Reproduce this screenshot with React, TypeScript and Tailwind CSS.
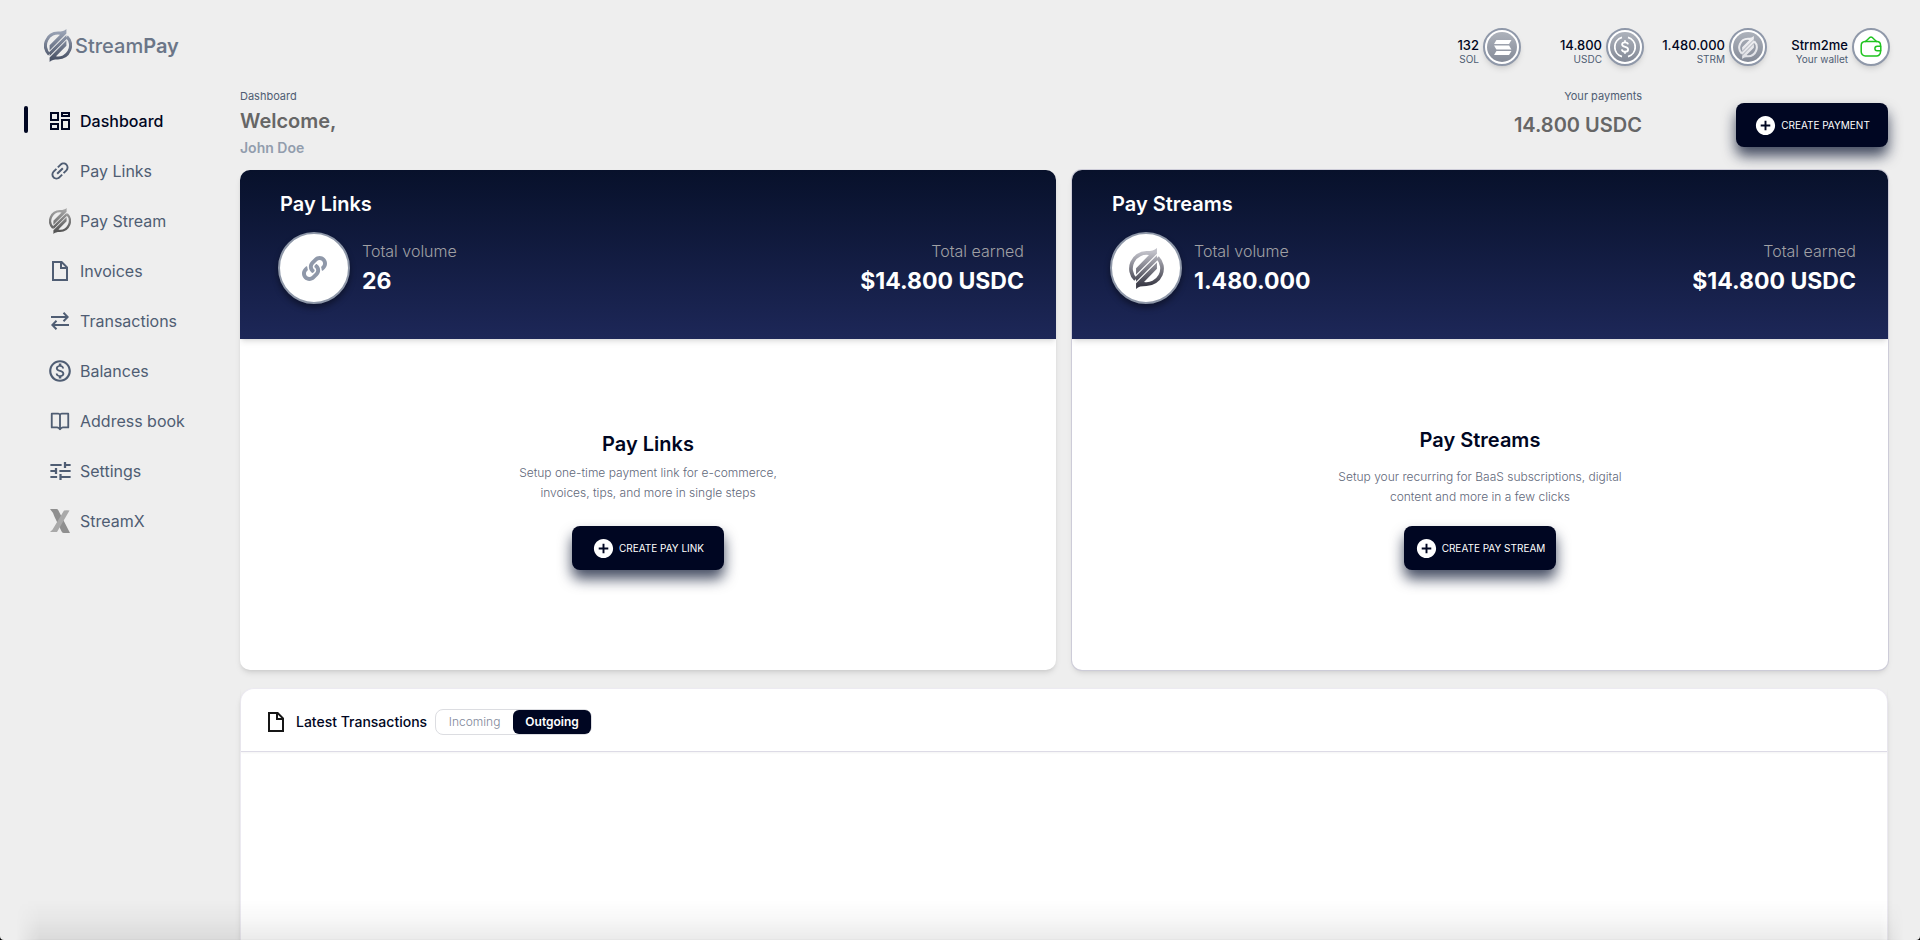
import { useId, useState } from "react";
import type { ReactNode } from "react";
import { FaLink } from "react-icons/fa";
import { BiBookOpen } from "react-icons/bi";
import { MdAddCircle, MdLink, MdOutlineMonetizationOn, MdTune } from "react-icons/md";

const MARK_HALF = "M4.1 26.4A14 14 0 0 1 14 2.500C18 2.500 20.500 2 22.400 0V4.600L5.600 21.400V16.200L16 5.700A11 11 0 0 0 6.200 24.300Z";

function StreamMark({ className, from, to }: { className: string; from: string; to: string }) {
  const id = useId();
  return (
    <svg viewBox="0 0 28 33" className={className} aria-hidden="true">
      <defs>
        <linearGradient id={id} x1="0" y1="0" x2="0" y2="33" gradientUnits="userSpaceOnUse">
          <stop offset="0.1" stopColor={from} />
          <stop offset="0.9" stopColor={to} />
        </linearGradient>
        <linearGradient id={`${id}-flip`} x1="0" y1="33" x2="0" y2="0" gradientUnits="userSpaceOnUse">
          <stop offset="0.1" stopColor={from} />
          <stop offset="0.9" stopColor={to} />
        </linearGradient>
      </defs>
      <path d={MARK_HALF} fill={`url(#${id})`} />
      <path d={MARK_HALF} transform="rotate(180 14 16.500)" fill={`url(#${id}-flip)`} />
      <path d="M5 23.300L22.400 5.900V7.500L23 9.700L5.600 27.100V25.500Z" fill={`url(#${id})`} />
    </svg>
  );
}

function DashboardIcon() {
  return (
    <svg viewBox="0 0 20 18" className="h-[18px] w-5" fill="none" stroke="currentColor" strokeWidth="2" aria-hidden="true">
      <path d="M1 1h7v7H1zM12 1h7v3h-7zM1 12h7v5H1zM12 8h7v9h-7z" />
    </svg>
  );
}

function FileIcon() {
  return (
    <svg viewBox="0 0 16 20" className="h-5 w-4" fill="none" stroke="currentColor" strokeWidth="2" aria-hidden="true">
      <path d="M1 1h8.600L15 6.400V19H1z" />
      <path d="M9 1v6h6" />
    </svg>
  );
}

function TransferIcon() {
  return (
    <svg viewBox="0 0 18 18" className="size-[18px]" fill="none" stroke="currentColor" strokeWidth="2" aria-hidden="true">
      <path d="M0 5h16.500M12.500 0.800L16.700 5L12.500 9.200" />
      <path d="M18 13H1.500M5.500 8.800L1.300 13L5.500 17.200" />
    </svg>
  );
}

function XIcon() {
  return (
    <svg viewBox="0 0 20 24" className="h-6 w-5" aria-hidden="true">
      <path d="M0 0h6.500q1.200 0 1.800 1.200L20 24h-6q-1.600 0-2.400-1.600L4.600 8Q3 3 0 0z" fill="#8f8f8f" />
      <path d="M19.500 1.500Q17 1 14 1.500L2.600 20.500 0 23h7z" fill="#a9a9a9" />
    </svg>
  );
}

function SolanaIcon() {
  return (
    <svg viewBox="0 0 20 16" className="h-[15px] w-[19px]" fill="#fff" aria-hidden="true">
      <path d="M3.500 0H19.500L17 4.200H1z" />
      <path d="M1 5.900H17L19.500 10.100H3.500z" />
      <path d="M3.500 11.800H19.500L17 16H1z" />
    </svg>
  );
}

function UsdcIcon() {
  return (
    <svg viewBox="0 0 22 22" className="h-[22px] w-[22px]" fill="none" stroke="#fff" strokeWidth="1.800" aria-hidden="true">
      <path d="M8 1.400a10 10 0 0 0 0 19.200M14 1.400a10 10 0 0 1 0 19.200" />
      <path d="M14 8.400C13.800 7 12.700 6.300 11 6.300S8.100 7.100 8.100 8.600c0 3.200 6 1.500 6 4.800 0 1.500-1.300 2.300-3.100 2.300S8 15 7.800 13.400M11 4.300v2M11 15.700v2" />
    </svg>
  );
}

function WalletIcon() {
  return (
    <svg viewBox="0 0 22 22" className="h-[22px] w-[22px]" fill="none" stroke="#1fc41f" strokeWidth="1.500" strokeLinecap="round" strokeLinejoin="round" aria-hidden="true">
      <path d="M20.500 10V8.800A3.500 3.500 0 0 0 17 5.500H5A4 4 0 0 0 1.200 9.500v6.300A4.200 4.200 0 0 0 5.400 20h11a4 4 0 0 0 4.100-4v-1.200" />
      <path d="M5.500 5.500L10 1.300q1-.8 2 0l4.500 4.200" />
      <path d="M20.800 10.200h-3.600a2.300 2.300 0 0 0 0 4.600h3.600z" />
    </svg>
  );
}

const navItems: { label: string; icon: ReactNode }[] = [
  { label: "Dashboard", icon: <DashboardIcon /> },
  { label: "Pay Links", icon: <MdLink className="size-6 -rotate-45" /> },
  { label: "Pay Stream", icon: <StreamMark className="h-[26px] w-[22px]" from="#a3a3a3" to="#555555" /> },
  { label: "Invoices", icon: <FileIcon /> },
  { label: "Transactions", icon: <TransferIcon /> },
  { label: "Balances", icon: <MdOutlineMonetizationOn className="size-[26px] shrink-0" /> },
  { label: "Address book", icon: <BiBookOpen className="size-[22px]" /> },
  { label: "Settings", icon: <MdTune className="h-6 w-[27px] shrink-0" preserveAspectRatio="none" /> },
  { label: "StreamX", icon: <XIcon /> },
];

function Sidebar() {
  return (
    <nav className="w-60 shrink-0 pt-2">
      <ul>
        {navItems.map((item, index) => (
          <li key={item.label} className="flex h-[50px] items-center pl-6">
            <span className={index === 0 ? "mb-1 h-[27px] w-1 rounded-sm bg-[#000622]" : "w-1"} />
            <a
              href="#"
              className={
                index === 0
                  ? "ml-5 flex items-center gap-2 font-medium text-[#000622]"
                  : "ml-5 flex items-center gap-2 text-[#4f5d73]"
              }
            >
              <span className="flex w-6 justify-center">{item.icon}</span>
              <span className="text-base">{item.label}</span>
            </a>
          </li>
        ))}
      </ul>
    </nav>
  );
}

function Coin({ amount, unit, children, plain }: { amount: string; unit: string; children: ReactNode; plain?: boolean }) {
  return (
    <div className="flex w-[123px] items-center justify-end gap-1">
      <div className="pt-2 text-right whitespace-nowrap">
        <p className="text-[13px] leading-4 font-medium text-[#000622]">{amount}</p>
        <p className="text-[10px] leading-3 text-[#4f5d73]">{unit}</p>
      </div>
      <div className="flex size-[38px] shrink-0 items-center justify-center rounded-full border-2 border-[#8f98a9] bg-white shadow-md">
        {plain ? (
          children
        ) : (
          <div className="flex size-[30px] items-center justify-center rounded-full bg-linear-to-b from-[#adb2bb] to-[#858b98]">{children}</div>
        )}
      </div>
    </div>
  );
}

function ActionButton({ label, className }: { label: string; className?: string }) {
  return (
    <button
      type="button"
      className={`flex h-11 w-[152px] shrink-0 cursor-pointer items-center justify-center gap-1 rounded-lg bg-[#000622] text-[10px] whitespace-nowrap text-white shadow-[0_9px_14px_rgba(10,20,48,0.75)] ${className ?? ""}`}
    >
      <MdAddCircle className="size-[23px]" />
      {label}
    </button>
  );
}

type PayCardProps = {
  title: string;
  volume: string;
  icon: ReactNode;
  description: string[];
  action: string;
  textClass: string;
  className: string;
};

function PayCard({ title, volume, icon, description, action, textClass, className }: PayCardProps) {
  return (
    <section className={`flex min-h-[500px] min-w-0 flex-1 flex-col overflow-hidden rounded-[10px] bg-white ${className}`}>
      <div className="h-[169px] bg-linear-to-b from-[#08112b] to-[#1d2758] pt-5 pr-8 pl-[38px] shadow-md">
        <h2 className="ml-0.5 text-xl leading-7 font-semibold text-white">{title}</h2>
        <div className="mt-3.5 flex items-center">
          <div className="flex size-[72px] items-center justify-center rounded-full border-2 border-[#8f98a9] bg-white shadow-[0_4px_6px_rgba(0,0,0,0.4)]">{icon}</div>
          <div className="ml-3 flex flex-1 justify-between pb-0.5 text-white">
            <div>
              <p className="text-base leading-7 font-light text-[#a0a0a4]">Total volume</p>
              <p className="text-[23px] leading-8 font-bold">{volume}</p>
            </div>
            <div className="text-right">
              <p className="text-base leading-7 font-light text-[#a0a0a4]">Total earned</p>
              <p className="text-[23px] leading-8 font-bold">$14.800 USDC</p>
            </div>
          </div>
        </div>
      </div>
      <div className="flex flex-1 flex-col items-center text-center">
        <div className={`flex h-[187px] flex-col ${textClass}`}>
          <h3 className="text-xl leading-7 font-semibold text-[#000622]">{title}</h3>
          <p className="text-xs leading-5 font-light text-[#5f687a]">
            {description.map((line) => (
              <span key={line} className="block">
                {line}
              </span>
            ))}
          </p>
        </div>
        <ActionButton label={action} />
      </div>
    </section>
  );
}

function Transactions() {
  const [tab, setTab] = useState("Outgoing");
  return (
    <section className="mt-[18px] flex min-h-[252px] flex-1 flex-col rounded-t-[14px] border border-b-0 border-[#eceaf1] bg-white shadow-md">
      <header className="flex h-[63px] items-center border-b border-[#dddbe6] pt-1 pl-[27px] shadow-xs">
        <span className="text-[#161616]">
          <FileIcon />
        </span>
        <h2 className="ml-3 text-sm font-medium text-[#000622]">Latest Transactions</h2>
        <div className="ml-2 flex h-[26px] rounded-lg border border-[#dcdde1]">
          {["Incoming", "Outgoing"].map((name) => (
            <button
              key={name}
              type="button"
              aria-pressed={tab === name}
              onClick={() => setTab(name)}
              className={
                tab === name
                  ? "w-[78px] cursor-pointer rounded-md bg-[#000622] text-xs font-semibold text-white"
                  : "w-[77px] cursor-pointer text-xs font-light text-[#7f889a]"
              }
            >
              {name}
            </button>
          ))}
        </div>
      </header>
    </section>
  );
}

export default function App() {
  return (
    <div className="bg-black">
      <div className="flex min-h-screen flex-col rounded-b-[4px] bg-[#eeeeee] font-['Inter',sans-serif]">
        <header className="flex h-[88px] items-start justify-between pr-[30px] pl-11">
          <a href="#" className="flex items-center gap-[3px] pt-[29px] text-xl font-medium text-[#6b7688]">
            <StreamMark className="h-[33px] w-7" from="#98a1b3" to="#4b5468" />
            <span className="leading-7">
              Stream<span className="font-semibold">Pay</span>
            </span>
          </a>
          <div className="flex pt-7">
            <Coin amount="132" unit="SOL">
              <SolanaIcon />
            </Coin>
            <Coin amount="14.800" unit="USDC">
              <UsdcIcon />
            </Coin>
            <Coin amount="1.480.000" unit="STRM">
              <StreamMark className="h-[23px] w-5" from="#f0f0f2" to="#e0e1e6" />
            </Coin>
            <Coin amount="Strm2me" unit="Your wallet" plain>
              <WalletIcon />
            </Coin>
          </div>
        </header>
        <div className="flex flex-1">
          <Sidebar />
          <main className="flex min-w-0 flex-1 flex-col pr-8">
            <div className="flex h-[82px] items-start">
              <div className="flex-1">
                <p className="text-[11px] leading-4 text-[#4f5d73]">Dashboard</p>
                <h1 className="text-xl leading-[34px] font-semibold text-[#666666]">Welcome,</h1>
                <p className="text-sm leading-5 font-semibold text-[#929dad]">John Doe</p>
              </div>
              <div className="mr-[94px] text-right">
                <p className="text-[11px] leading-4 text-[#4f5d73]">Your payments</p>
                <p className="text-xl leading-[42px] font-semibold text-[#666666]">14.800 USDC</p>
              </div>
              <ActionButton label="CREATE PAYMENT" className="mt-[15px]" />
            </div>
            <div className="flex gap-4">
              <PayCard
                title="Pay Links"
                volume="26"
                icon={<FaLink className="size-[25px] text-[#8f98a9]" />}
                description={["Setup one-time payment link for e-commerce,", "invoices, tips, and more in single steps"]}
                action="CREATE PAY LINK"
                textClass="gap-[5px] pt-[91px]"
                className="shadow-md"
              />
              <PayCard
                title="Pay Streams"
                volume="1.480.000"
                icon={<StreamMark className="h-[41px] w-[35px]" from="#c0c0c8" to="#3c3c48" />}
                description={["Setup your recurring for BaaS subscriptions, digital", "content and more in a few clicks"]}
                action="CREATE PAY STREAM"
                textClass="gap-[13px] pt-[87px]"
                className="shadow-md ring-1 ring-[#cdccd8]"
              />
            </div>
            <Transactions />
          </main>
        </div>
        <div className="pointer-events-none fixed right-4 bottom-0 left-4 h-10 border-b border-black/10 bg-linear-to-t from-black/8 via-black/3 to-transparent mask-x-from-[calc(100%-24px)] mask-x-to-100%" />
      </div>
    </div>
  );
}
